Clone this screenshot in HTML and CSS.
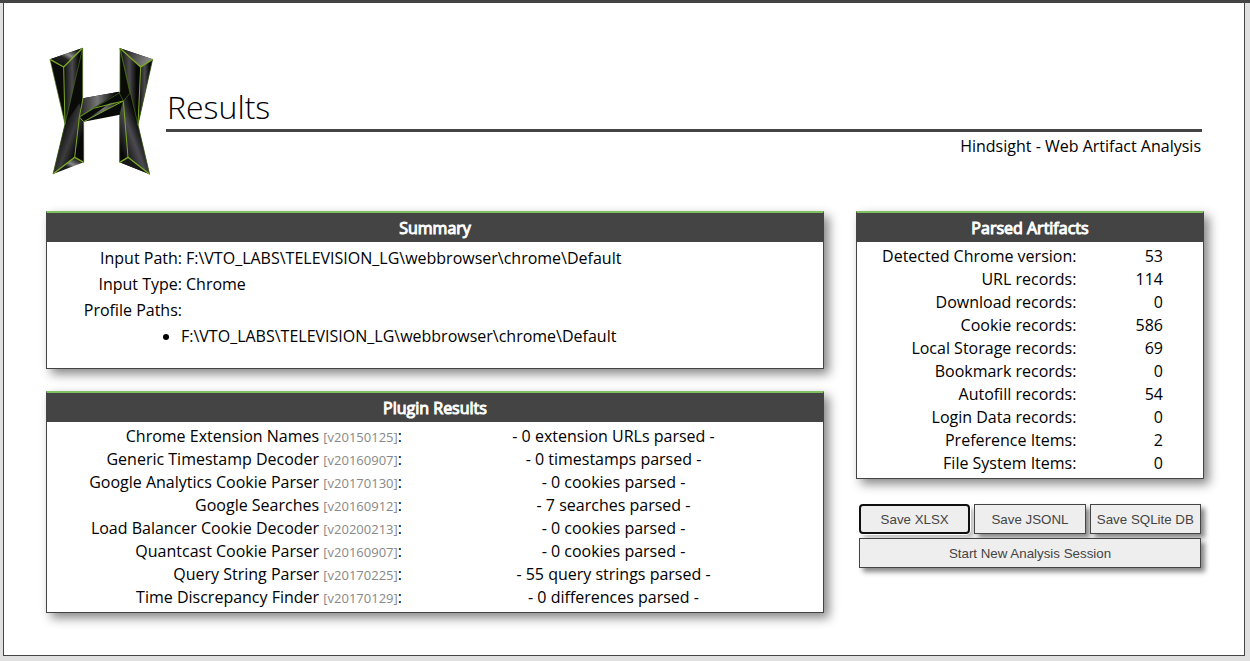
FILE: index.html
```html
<!DOCTYPE html>
<html lang="en">
<head>
<meta charset="UTF-8">
<meta name="viewport" content="width=device-width, initial-scale=1.0">
<title>Hindsight - Results</title>
<link rel="stylesheet" href="styles.css">
</head>
<body>

<div class="wrapper">

<!-- Logo and title -->
<div class="header">
    <svg class="logo" viewBox="27 36 312 384" role="img" aria-label="Hindsight logo">
        <defs>
            <linearGradient id="leg" x1="0" y1="0" x2="1" y2="0">
                <stop offset="0" stop-color="#0a0a0a"/>
                <stop offset="0.45" stop-color="#4c4a4e"/>
                <stop offset="0.8" stop-color="#080808"/>
            </linearGradient>
            <linearGradient id="foot" gradientUnits="userSpaceOnUse" x1="50" y1="300" x2="130" y2="330">
                <stop offset="0" stop-color="#030303"/>
                <stop offset="0.5" stop-color="#3c3c3e"/>
                <stop offset="0.85" stop-color="#080808"/>
            </linearGradient>
            <linearGradient id="footright" gradientUnits="userSpaceOnUse" x1="239" y1="340" x2="320" y2="310">
                <stop offset="0" stop-color="#060606"/>
                <stop offset="0.55" stop-color="#4a4a50"/>
                <stop offset="0.9" stop-color="#0a0a0a"/>
            </linearGradient>
            <linearGradient id="cap" x1="0" y1="1" x2="1" y2="0">
                <stop offset="0" stop-color="#080808"/>
                <stop offset="0.45" stop-color="#222"/>
                <stop offset="0.6" stop-color="#888"/>
                <stop offset="0.85" stop-color="#151515"/>
            </linearGradient>
            <linearGradient id="capright" x1="0" y1="0" x2="1" y2="0.3">
                <stop offset="0" stop-color="#111"/>
                <stop offset="1" stop-color="#888"/>
            </linearGradient>
            <linearGradient id="bar" x1="0" y1="0" x2="1" y2="0">
                <stop offset="0" stop-color="#222"/>
                <stop offset="0.45" stop-color="#777"/>
                <stop offset="0.9" stop-color="#080808"/>
            </linearGradient>
        </defs>
        <g>
            <!-- left leg -->
            <path fill="#0a0b09" d="M30 73 L128 39 V200 L131 382 L104 367 L39 417 L75 267 Z"/>
            <path fill="url(#cap)" d="M30 73 L128 39 L71 96 Z"/>
            <path fill="url(#leg)" d="M71 96 L128 39 L75 267 Z"/>
            <path fill="url(#foot)" d="M75 267 L118 205 L131 255 V382 L104 367 L39 417 Z"/>
            <path fill="url(#cap)" d="M39 417 L104 367 L131 382 Z"/>
            <!-- right leg -->
            <path fill="#0a0b09" d="M240 40 L338 73 L294 269 L329 418 L239 382 Z"/>
            <path fill="url(#capright)" d="M240 40 L338 73 L302 96 Z"/>
            <path fill="url(#leg)" d="M338 73 L302 96 L294 269 Z"/>
            <path fill="url(#leg)" d="M240 40 L302 96 L294 269 Z"/>
            <path fill="url(#footright)" d="M250 198 L270 175 L294 269 L329 418 L264 367 L239 382 V240 Z"/>
            <path fill="#181818" d="M239 382 L264 367 L329 418 Z"/>
            <!-- crossbar -->
            <path fill="#080a07" d="M129 190 L238 170 L250 198 L240 239 L131 260 L118 246 Z"/>
            <path fill="url(#bar)" d="M129 190 L238 170 L118 246 Z"/>
            <path fill="url(#bar)" d="M140 254 L210 204 L250 198 Z"/>
        </g>
        <g fill="none" stroke="#7caa27" stroke-width="2" stroke-linejoin="round">
            <path stroke-width="4" d="M30 73 L71 96 L128 39 M240 40 L302 96 L338 73"/>
            <path stroke-width="4" d="M39 417 L104 367 L131 382 M239 382 L264 367 L329 418"/>
            <path stroke-width="3" d="M71 96 L75 267 M302 96 L294 269 M104 367 L118 246 M264 367 L250 198"/>
            <path stroke-width="3" d="M118 246 L160 220 L250 198 L131 260 L118 246 L129 190"/>
        </g>
        <g fill="none" stroke="#4a7318" stroke-width="2">
            <path d="M30 73 L75 267 L39 417 M128 39 L75 267 M128 39 V188 M131 260 V382"/>
            <path d="M338 73 L294 269 L329 418 M240 40 L294 269 M240 40 V170 M239 242 V382"/>
            <path d="M240 40 L270 175 L250 198 M118 246 L238 174 L250 198 L240 240"/>
        </g>
    </svg>
    <div class="title">
        <h1>Results</h1>
        <p>Hindsight - Web Artifact Analysis</p>
    </div>
</div>

<div class="content">

    <div class="main">
        <div class="box">
            <h2>Summary</h2>
            <dl class="summary">
                <dt>Input Path:</dt>
                <dd>F:\VTO_LABS\TELEVISION_LG\webbrowser\chrome\Default</dd>
                <dt>Input Type:</dt>
                <dd>Chrome</dd>
                <dt>Profile Paths:</dt>
                <dd class="paths">
                    <ul>
                        <li>F:\VTO_LABS\TELEVISION_LG\webbrowser\chrome\Default</li>
                    </ul>
                </dd>
            </dl>
        </div>

        <div class="box">
            <h2>Plugin Results</h2>
            <table class="plugins">
                <tr><th>Chrome Extension Names <span>[v20150125]</span>:</th><td>- 0 extension URLs parsed -</td></tr>
                <tr><th>Generic Timestamp Decoder <span>[v20160907]</span>:</th><td>- 0 timestamps parsed -</td></tr>
                <tr><th>Google Analytics Cookie Parser <span>[v20170130]</span>:</th><td>- 0 cookies parsed -</td></tr>
                <tr><th>Google Searches <span>[v20160912]</span>:</th><td>- 7 searches parsed -</td></tr>
                <tr><th>Load Balancer Cookie Decoder <span>[v20200213]</span>:</th><td>- 0 cookies parsed -</td></tr>
                <tr><th>Quantcast Cookie Parser <span>[v20160907]</span>:</th><td>- 0 cookies parsed -</td></tr>
                <tr><th>Query String Parser <span>[v20170225]</span>:</th><td>- 55 query strings parsed -</td></tr>
                <tr><th>Time Discrepancy Finder <span>[v20170129]</span>:</th><td>- 0 differences parsed -</td></tr>
            </table>
        </div>
    </div>

    <div class="side">
        <div class="box">
            <h2>Parsed Artifacts</h2>
            <table class="artifacts">
                <tr><th>Detected Chrome version:</th><td>53</td></tr>
                <tr><th>URL records:</th><td>114</td></tr>
                <tr><th>Download records:</th><td>0</td></tr>
                <tr><th>Cookie records:</th><td>586</td></tr>
                <tr><th>Local Storage records:</th><td>69</td></tr>
                <tr><th>Bookmark records:</th><td>0</td></tr>
                <tr><th>Autofill records:</th><td>54</td></tr>
                <tr><th>Login Data records:</th><td>0</td></tr>
                <tr><th>Preference Items:</th><td>2</td></tr>
                <tr><th>File System Items:</th><td>0</td></tr>
            </table>
        </div>

        <div class="buttons">
            <button type="button" class="active">Save XLSX</button>
            <button type="button">Save JSONL</button>
            <button type="button">Save SQLite DB</button>
            <button type="button" class="wide">Start New Analysis Session</button>
        </div>
    </div>

</div>
</div>

</body>
</html>
```

FILE: styles.css
```css
* {
    box-sizing: border-box;
}

body {
    margin: 0;
    border-top: 3px solid #444;
    background-color: #e0e0e0;
    color: #000;
    font-family: "Open Sans", sans-serif;
    font-size: 16px;
    font-weight: 400;
    line-height: 23px;
}

.wrapper {
    margin: 0 5px 5px 3px;
    padding: 44px 40px 42px 42px;
    border: 1px solid #444;
    border-top: none;
    background-color: #fff;
}

/* Header */
.header {
    display: flex;
    gap: 13px;
    padding: 0 2px 0 3px;
    margin-bottom: 36px;
}

.logo {
    width: 104px;
    height: 128px;
    flex: none;
}

.title {
    flex: 1;
    padding-top: 37px;
}

.title h1 {
    margin: 0;
    padding-left: 1px;
    border-bottom: 3px solid #444;
    font-size: 32px;
    font-weight: 300;
    line-height: 45px;
}

.title p {
    margin: 3px 0 0;
    padding-right: 1px;
    text-align: right;
}

/* Boxes */
.content {
    display: grid;
    grid-template-columns: 1fr 348px;
    gap: 32px;
}

.box {
    margin-bottom: 22px;
    border: 1px solid #444;
    border-top: 2px solid #80c060;
    background-color: #fff;
    box-shadow: 5px 5px 10px #888;
}

.main .box:last-child {
    margin-bottom: 0;
}

.box h2 {
    margin: 0;
    padding: 4px 0 2px;
    background-color: #444;
    color: #fff;
    font-size: 16px;
    font-weight: 400;
    line-height: 23px;
    text-align: center;
    -webkit-text-stroke: 1px #fff;
}

.summary {
    display: grid;
    grid-template-columns: 135px 1fr;
    column-gap: 4px;
    margin: 0;
    padding: 3px 0 19px;
    line-height: 26px;
}

.summary dt {
    text-align: right;
}

.summary dd {
    margin: 0;
}

.summary .paths {
    grid-column: 1 / -1;
}

.summary ul {
    margin: 0;
    padding-left: 134px;
}

table {
    width: 100%;
    margin: 3px 0;
    border-collapse: collapse;
}

th,
td {
    padding: 0 2px;
    font-weight: 400;
}

th {
    text-align: right;
}

.plugins th {
    width: 46%;
}

.plugins th span {
    color: #888;
    font-size: 13px;
    line-height: 16px;
}

.plugins td {
    text-align: center;
}

.artifacts th {
    width: 64%;
}

.artifacts td {
    padding-right: 40px;
    text-align: right;
}

/* Buttons */
.buttons {
    display: grid;
    grid-template-columns: repeat(3, 1fr);
    gap: 4px;
    margin-top: 25px;
    padding: 0 3px;
}

.buttons button {
    height: 30px;
    padding: 0;
    border: 1px solid #444;
    background-color: #eee;
    color: #444;
    font-family: "Liberation Sans", Arial, sans-serif;
    box-shadow: 4px 4px 5px #888;
}

.buttons .active {
    border: 2px solid #101010;
    border-radius: 4px;
    box-shadow: 0 0 0 1px #fff, 4px 4px 5px #bbb;
}

.buttons .wide {
    grid-column: 1 / -1;
}
```
